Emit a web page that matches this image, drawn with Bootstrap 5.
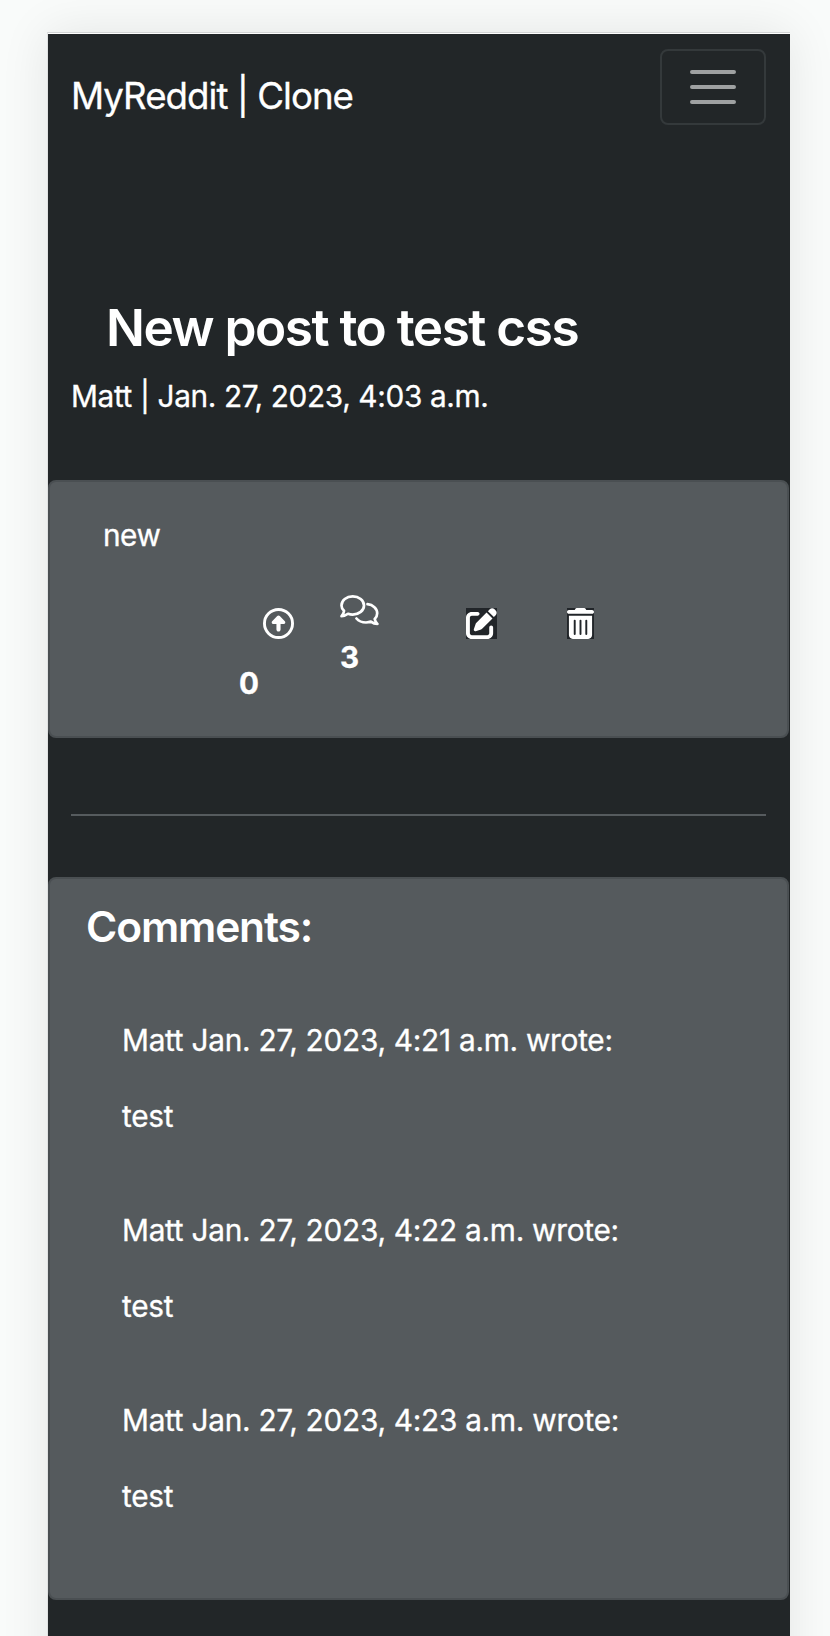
<!DOCTYPE html>
<html lang="en">
<head>
<meta charset="utf-8">
<meta name="viewport" content="width=device-width, initial-scale=1">
<title>MyReddit | Clone</title>
<link href="https://cdn.jsdelivr.net/npm/bootstrap@5.3.0/dist/css/bootstrap.min.css" rel="stylesheet">
<style>
  body { background: #f9fbfa; font-family: Inter, "Liberation Sans", sans-serif; font-size: 29.8px; line-height: 45px; color: #fff; overflow: hidden; -webkit-text-stroke: .3px #fff; }
  .stage { height: 1636px; padding: 32px 40px 0 47px; overflow: hidden; }
  .screen { height: 1700px; width: 743px; background: #222628; border-top: 1px solid #d3d5d5; border-left: 1px solid #dfe1e1; box-shadow: 0 0 46px rgba(0,0,0,.09); }
  .screen::before { content: ""; display: block; height: 1px; background: #fff; }
  .site-nav { height: 263px; padding: 15px 24px 0 23px; }
  .navbar-brand { font-size: 36.7px; line-height: 56px; letter-spacing: -1px; margin: 19px 0 0; padding: 0; color: #fff; }
  .menu-btn { width: 106px; height: 76px; border: 2px solid #34393b; border-radius: 8px; background: transparent; padding: 0; }
  .menu-btn svg { width: 46px; height: 34px; margin-top: -1px; }
  .title-text { font-size: 51.3px; line-height: 60px; font-weight: 600; letter-spacing: -1.5px; padding-left: 58px; margin: 0 0 17px; -webkit-text-stroke: 0; }
  .meta-text { letter-spacing: -.37px; padding-left: 23px; margin: 0; }
  .panel { background: #555a5d; border: 2px solid #4a4f52; border-radius: 8px; width: 741px; color: #fff; }
  .post-panel { height: 258px; margin-top: 61px; }
  .post-text { padding: 31px 0 0 53px; margin: 0 0 1px; letter-spacing: -.5px; }
  .actions { padding-left: 189px; }
  .vote { margin-top: 49px; }
  .replies { margin: 36px 0 0 46px; }
  .tool-icon { background: #212529; margin-top: 49px; }
  .edit-icon { margin-left: 87px; }
  .trash-icon { margin-left: 70px; }
  .count { font-size: 29.6px; font-weight: 700; line-height: 45px; }
  .vote .count { margin-top: 22px; }
  .replies .count { margin-top: 9px; }
  .rule { height: 2px; margin: 76px 24px 61px 23px; background: #565b5e; }
  .talk-panel { height: 723px; padding: 18px 0 0 36px; }
  .talk-title { font-size: 42.5px; line-height: 60px; font-weight: 600; letter-spacing: -1.15px; margin: 0 0 61px; -webkit-text-stroke: 0; }
  .entry { padding-left: 36px; height: 190px; }
  .entry p { letter-spacing: -.27px; margin: 0 0 31px; }
  svg { display: block; }
</style>
</head>
<body>
<div class="stage">
  <div class="screen">
    <nav class="site-nav d-flex justify-content-between align-items-start">
      <a class="navbar-brand" href="#">MyReddit | Clone</a>
      <button class="menu-btn d-flex align-items-center justify-content-center" type="button" aria-label="Toggle navigation">
        <svg viewBox="0 0 46 34" stroke="#9fa1a2" stroke-width="4" stroke-linecap="round"><path d="M2 2h42M2 17h42M2 32h42"/></svg>
      </button>
    </nav>
    <header>
      <h1 class="title-text">New post to test css</h1>
      <p class="meta-text">Matt | Jan. 27, 2023, 4:03 a.m.</p>
    </header>
    <section class="panel post-panel">
      <p class="post-text">new</p>
      <div class="actions d-flex align-items-start">
        <div class="vote">
          <svg class="ms-4" width="31" height="31" viewBox="0 0 512 512" fill="#fff"><circle cx="256" cy="256" r="232" fill="none" stroke="#fff" stroke-width="48"/><path d="M256 122c8 0 15 3 21 9l84 88c16 16 5 45-17 45h-54v92c0 18-14 34-34 34s-34-16-34-34v-92h-54c-22 0-33-29-17-45l84-88c6-6 13-9 21-9z"/></svg>
          <div class="count">0</div>
        </div>
        <div class="replies">
          <svg width="39" height="31" viewBox="0 0 39 31" fill="none" stroke="#fff" stroke-width="2.700" stroke-linejoin="round" stroke-linecap="round"><path d="M4 15.800C2.400 14.200 1.500 12.300 1.500 10.400 1.500 5.400 6.500 1.400 12.700 1.400S24 5.400 24 10.400s-5.100 9.200-11.300 9.200c-1.700 0-3.300-.3-4.700-.8-1.700 1.300-3.800 2.400-6.500 2.400 1.500-1.500 2.300-3.200 2.500-5.400z"/><path d="M27.500 9.200c5.500.5 9.700 4.300 9.700 9.100 0 2.200-.9 4.200-2.500 5.700.4 2 1.300 3.600 2.700 4.900-2.600 0-4.800-1-6.500-2.300-1.500.6-3.100.9-4.900.9-4 0-7.500-1.600-9.500-4"/></svg>
          <div class="count">3</div>
        </div>
        <svg class="tool-icon edit-icon" width="31" height="31" viewBox="0 0 512 512" fill="#fff"><path d="M471.600 21.700c-21.900-21.900-57.300-21.900-79.200 0L362.300 51.700l97.900 97.900 30.100-30.100c21.900-21.900 21.900-57.300 0-79.200L471.600 21.700zm-299.200 220c-6.100 6.100-10.800 13.600-13.500 21.900l-29.600 88.800c-2.900 8.600-.6 18.100 5.800 24.600s15.900 8.700 24.600 5.800l88.800-29.600c8.200-2.700 15.700-7.400 21.900-13.500L437.700 172.300 339.700 74.300 172.400 241.700zM96 64C43 64 0 107 0 160V416c0 53 43 96 96 96H352c53 0 96-43 96-96V320c0-17.700-14.300-32-32-32s-32 14.300-32 32v96c0 17.700-14.300 32-32 32H96c-17.700 0-32-14.300-32-32V160c0-17.700 14.300-32 32-32h96c17.700 0 32-14.300 32-32s-14.300-32-32-32H96z"/></svg>
        <svg class="tool-icon trash-icon" width="27" height="31" viewBox="0 0 448 512" fill="#fff"><path d="M135.200 17.700C140.600 6.800 151.700 0 163.800 0H284.200c12.100 0 23.200 6.800 28.600 17.700L320 32h96c17.700 0 32 14.300 32 32s-14.300 32-32 32H32C14.300 96 0 81.700 0 64S14.300 32 32 32h96l7.200-14.300zM32 128H416V448c0 35.300-28.700 64-64 64H96c-35.300 0-64-28.700-64-64V128z"/><path d="M128 208V432M224 208V432M320 208V432" stroke="#212529" stroke-width="32" stroke-linecap="round"/></svg>
      </div>
    </section>
    <div class="rule"></div>
    <section class="panel talk-panel">
      <h2 class="talk-title">Comments:</h2>
      <div class="entry"><p>Matt Jan. 27, 2023, 4:21 a.m. wrote:</p><p>test</p></div>
      <div class="entry"><p>Matt Jan. 27, 2023, 4:22 a.m. wrote:</p><p>test</p></div>
      <div class="entry"><p>Matt Jan. 27, 2023, 4:23 a.m. wrote:</p><p>test</p></div>
    </section>
  </div>
</div>
<script src="https://cdn.jsdelivr.net/npm/bootstrap@5.3.0/dist/js/bootstrap.bundle.min.js"></script>
</body>
</html>
